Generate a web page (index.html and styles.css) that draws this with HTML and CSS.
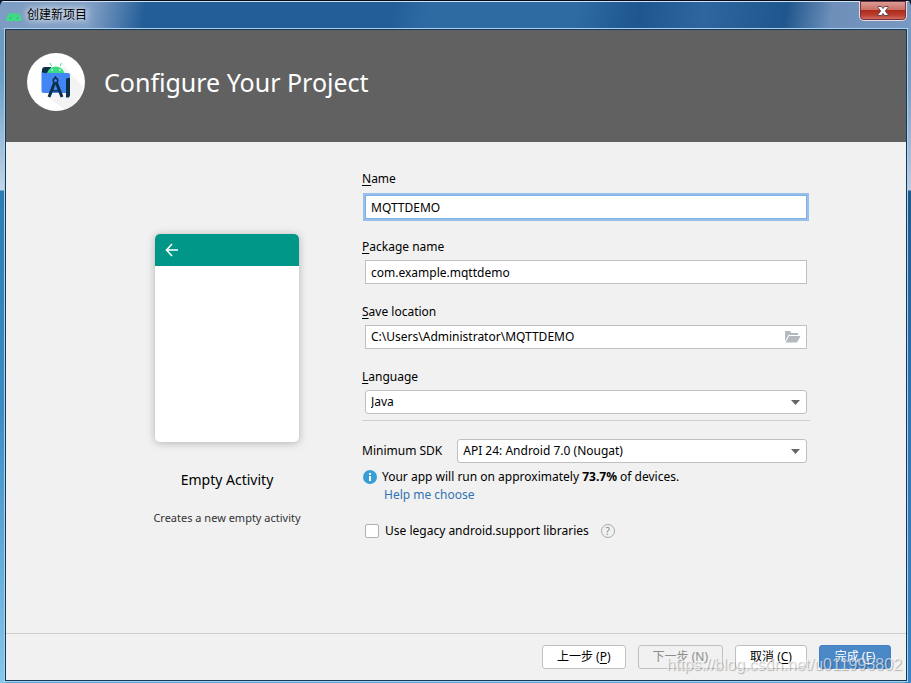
FILE: index.html
```html
<!DOCTYPE html>
<html lang="zh-CN">
<head>
<meta charset="utf-8">
<title>创建新项目</title>
<link rel="stylesheet" href="styles.css">
</head>
<body>
<div class="window">
  <div class="titlebar">
    <svg class="titlebar-icon" width="16" height="16" viewBox="0 0 16 16" aria-hidden="true">
      <path d="M0 14a8 8 0 0 1 16 0z" fill="#3ddc84"/>
      <path d="M3.500 8.500 2 5.500M12.500 8.500 14 5.500" stroke="#3ddc84"/>
      <circle cx="4.500" cy="11" r=".7" fill="#4a7fa8"/><circle cx="11.500" cy="11" r=".7" fill="#4a7fa8"/>
    </svg>
    <span class="titlebar-text">创建新项目</span>
    <button class="close" type="button" aria-label="关闭">
      <svg width="12" height="10" viewBox="0 0 12 10" aria-hidden="true">
        <path d="M1 .5h3.500L6 2.500 7.500.5H11v1L8.300 5 11 8.500v1H7.500L6 7.500 4.500 9.500H1v-1L3.700 5 1 1.500z" fill="#fff" stroke="#5a3a48" stroke-width=".9"/>
      </svg>
    </button>
  </div>
  <div class="dialog">
    <header class="header">
      <svg class="logo" width="58" height="58" viewBox="0 0 58 58" aria-hidden="true">
        <circle cx="29" cy="29" r="29" fill="#fff"/>
        <path d="M37 13 56 34A29 29 0 0 1 38 56.500L22 45z" fill="#f3f3f3"/>
        <path d="M18 14h6v7h-9v-4a3 3 0 0 1 3-3z" fill="#0b3048"/>
        <path d="M14.500 17q0 3 3 3H41q2 0 2 2v16q0 2-2 2H16.500q-2 0-2-2z" fill="#4285f4"/>
        <path d="M20 20a9 8.500 0 0 1 17.500 0z" fill="#3ddc84"/>
        <path d="m24.500 13-1.500-3M33 13l1.500-3" stroke="#3ddc84"/>
        <circle cx="25" cy="17" r=".8" fill="#fff"/><circle cx="33" cy="17" r=".8" fill="#fff"/>
        <path d="M39 27q0-2 2-2h2v17q0 3-4 2.500z" fill="#0b3048"/>
        <circle cx="28.500" cy="27.500" r="2.300" fill="none" stroke="#0b3048" stroke-width="1.500"/>
        <path d="M28.500 25v-2" stroke="#0b3048" stroke-width="1.500"/>
        <path d="m27.500 30-5.500 14M29.500 30 35 44" stroke="#0b3048" stroke-width="3"/>
        <path d="M25 37q3.500 2 7 0" fill="none" stroke="#0b3048" stroke-width="1.500"/>
      </svg>
      <h1 class="heading">Configure Your Project</h1>
    </header>
    <main class="main">
      <section class="preview">
        <div class="phone">
          <div class="phone-bar">
            <svg width="14" height="14" viewBox="0 0 14 14" aria-hidden="true"><path d="M13 7H2M7 1 1.500 7 7 13" fill="none" stroke="#fff" stroke-width="1.600"/></svg>
          </div>
        </div>
        <h2 class="preview-title">Empty Activity</h2>
        <p class="preview-note">Creates a new empty activity</p>
      </section>
      <form class="form">
        <div class="field field-active">
          <label for="name"><u>N</u>ame</label>
          <input class="control" id="name" type="text" value="MQTTDEMO">
        </div>
        <div class="field">
          <label for="package"><u>P</u>ackage name</label>
          <input class="control" id="package" type="text" value="com.example.mqttdemo">
        </div>
        <div class="field">
          <label for="location"><u>S</u>ave location</label>
          <div class="control path">
            <input class="path-input" id="location" type="text" value="C:\Users\Administrator\MQTTDEMO">
            <button class="browse" type="button" aria-label="Browse">
              <svg width="16" height="12" viewBox="0 0 16 12" aria-hidden="true"><path d="M0 0h5l1.500 2H13v2H3.500L0 10z" fill="#b4b9bd"/><path d="M4 5h11.500L12 11.500H.5z" fill="#b4b9bd"/></svg>
            </button>
          </div>
        </div>
        <div class="field">
          <label for="language"><u>L</u>anguage</label>
          <div class="select">
            <select class="control" id="language"><option>Java</option><option>Kotlin</option></select>
            <svg class="arrow" width="9" height="5" viewBox="0 0 9 5" aria-hidden="true"><path d="M0 0h9L4.500 5z" fill="#666"/></svg>
          </div>
        </div>
        <hr class="rule">
        <div class="sdk">
          <label for="sdk">Minimum SDK</label>
          <div class="select">
            <select class="control" id="sdk"><option>API 24: Android 7.0 (Nougat)</option></select>
            <svg class="arrow" width="9" height="5" viewBox="0 0 9 5" aria-hidden="true"><path d="M0 0h9L4.500 5z" fill="#666"/></svg>
          </div>
        </div>
        <div class="info">
          <svg width="14" height="14" viewBox="0 0 14 14" aria-hidden="true"><circle cx="7" cy="7" r="7" fill="#389fd6"/><path d="M6 3h2v2H6zM6 6h2v5H6z" fill="#fff"/></svg>
          <p>Your app will run on approximately <b>73.7%</b> of devices.</p>
        </div>
        <a class="help-link" href="#">Help me choose</a>
        <div class="legacy">
          <input class="checkbox" id="legacy" type="checkbox">
          <label for="legacy">Use legacy android.support libraries</label>
          <button class="hint" type="button" aria-label="Help">?</button>
        </div>
      </form>
    </main>
    <footer class="footer">
      <button class="button" type="button">上一步 (<u>P</u>)</button>
      <button class="button" type="button" disabled>下一步 (N)</button>
      <button class="button" type="button">取消 (<u>C</u>)</button>
      <button class="button button-primary" type="submit">完成 (<u>F</u>)</button>
    </footer>
  </div>
  <span class="watermark">https://blog.csdn.net/u011995802</span>
</div>
</body>
</html>
```
FILE: styles.css
```css
* {
  box-sizing: border-box;
}

body {
  margin: 0;
  background: #0a1a30;
  color: #000;
  font: 12px/18px "Noto Sans", "Noto Sans CJK SC", sans-serif;
}

h1, h2, p {
  margin: 0;
  font-weight: 400;
}

button, input, select {
  color: inherit;
  font: inherit;
}

u {
  text-underline-offset: 2px;
}

.window {
  position: relative;
  display: flex;
  flex-direction: column;
  min-height: 100vh;
  padding: 1px 4px 2px 5px;
  border-radius: 6px 6px 0 0;
  background:
    linear-gradient(#050d1c, #050d1c) top / 100% 1px no-repeat,
    linear-gradient(#d4e2f0, #d4e2f0) 0 1px / 100% 1px no-repeat,
    linear-gradient(100deg, #7d9cc3 0, #819fc5 10%, #235e98 16%, #235e98 43%, #2f6ba3 47%, #2f6ba3 63%, #1e568f 70%, #2f66a0 77%, #1f568d 86%, #6d8fb9 91%, #7899c1 100%) 0 2px / 100% 28px no-repeat,
    linear-gradient(#7092b8 0, #6fa0c5 80px, #c3d5e8 190px, #2c7db4 191px, #3b8cc4 60%, #87c7ea 100%) left / 6px 100% no-repeat,
    linear-gradient(#7294bd 0, #7d9dc2 80px, #becce2 190px, #1d5a90 191px, #2f74b5 60%, #3a86c8 100%) right / 6px 100% no-repeat,
    #5ba6d8;
}

.titlebar {
  display: flex;
  align-items: center;
  height: 28px;
  padding-left: 1px;
}

.titlebar-text {
  margin-left: 5px;
  color: #000;
  text-shadow: 0 0 6px #fff, 0 0 10px #fff;
}

.close {
  display: grid;
  place-items: center;
  align-self: flex-start;
  width: 48px;
  height: 20px;
  margin-left: auto;
  padding: 0;
  border: 1px solid #f0d8dc;
  border-top: 0;
  border-radius: 0 0 5px 5px;
  background: linear-gradient(#dba29b 0, #cb7167 45%, #ab2c1c 50%, #bd3f30 75%, #d4786f 100%);
  box-shadow: inset 0 0 0 1px #713340;
}

.dialog {
  display: flex;
  flex: 1;
  flex-direction: column;
  border: 1px solid #16395a;
  outline: 1px solid #a9d0ec;
  background: #f1f1f1;
}

.header {
  display: flex;
  align-items: center;
  gap: 19px;
  height: 112px;
  padding: 0 21px 8px;
  background: #616161;
  color: #fff;
}

.heading {
  font-size: 25px;
  line-height: 36px;
}

.main {
  display: grid;
  flex: 1;
  grid-template-columns: 148px 1fr;
  gap: 61px;
  padding: 28px 96px 24px 147px;
}

.preview {
  display: flex;
  flex-direction: column;
  align-items: center;
  padding-top: 64px;
  white-space: nowrap;
}

.phone {
  width: 144px;
  height: 208px;
  overflow: hidden;
  border-radius: 5px;
  background: #fff;
  box-shadow: 0 1px 8px #0004;
}

.phone-bar {
  display: flex;
  align-items: center;
  height: 32px;
  padding-left: 10px;
  background: #009688;
}

.preview-title {
  margin-top: 28px;
  font-size: 14px;
  line-height: 20px;
}

.preview-note {
  margin-top: 19px;
  color: #333;
  font-size: 11px;
}

.field {
  display: flex;
  flex-direction: column;
  gap: 4px;
  margin-bottom: 19px;
}

.field label {
  align-self: flex-start;
}

.field > .control,
.field > .select {
  margin: 0 3px;
}

.field-active {
  gap: 7px;
}

.field-active .control {
  border-color: #7eb0e6;
  outline: 2px solid #97c0ec;
}

.control {
  height: 24px;
  padding: 0 5px;
  border: 1px solid #c0c0c0;
  border-radius: 0;
  background: #fff;
}

.path {
  display: flex;
  align-items: center;
}

.path-input {
  flex: 1;
  min-width: 0;
  padding: 0;
  border: 0;
  outline: 0;
  background: none;
}

.browse {
  display: flex;
  padding: 0;
  border: 0;
  background: none;
}

.select {
  display: grid;
  flex: 1;
  align-items: center;
}

.select .control {
  grid-area: 1 / 1;
  width: 100%;
  border-radius: 3px;
  appearance: none;
}

.arrow {
  grid-area: 1 / 1;
  justify-self: end;
  margin-right: 7px;
  pointer-events: none;
}

.rule {
  height: 1px;
  margin: -13px 0 18px;
  border: 0;
  background: #cfcfcf;
}

.sdk {
  display: flex;
  align-items: center;
  gap: 15px;
  padding-right: 3px;
}

.info {
  display: flex;
  align-items: center;
  gap: 5px;
  margin-top: 5px;
  padding-left: 1px;
}

.help-link {
  display: block;
  width: fit-content;
  margin-left: 22px;
  color: #3173b3;
  text-decoration: none;
}

.legacy {
  display: flex;
  align-items: center;
  margin-top: 18px;
  padding-left: 3px;
}

.checkbox {
  width: 14px;
  height: 14px;
  margin: 0 6px 0 0;
  border: 1px solid #b0b0b0;
  border-radius: 2px;
  background: #fff;
  appearance: none;
}

.hint {
  width: 14px;
  height: 14px;
  margin-left: 12px;
  padding: 0;
  border: 1px solid #a5a8ab;
  border-radius: 50%;
  background: none;
  color: #84888c;
  font-size: 10px;
  line-height: 12px;
}

.footer {
  display: flex;
  justify-content: flex-end;
  gap: 12px;
  padding: 11px 15px;
  border-top: 1px solid #d0d0d0;
}

.button {
  height: 24px;
  min-width: 72px;
  padding: 0 14px;
  border: 1px solid #c0c0c0;
  border-radius: 3px;
  background: #fff;
  line-height: 20px;
}

.button:disabled {
  background: #f1f1f1;
  color: #8c8c8c;
}

.button-primary {
  padding: 0 12px;
  border-color: #4282c4;
  background: #4a88c7;
  color: #fff;
}

.watermark {
  position: absolute;
  right: 9px;
  bottom: 9px;
  color: #ffffffa0;
  font: 16px/18px "Liberation Sans", sans-serif;
  text-shadow: 1px 1px 1px #0004;
  pointer-events: none;
}
```
